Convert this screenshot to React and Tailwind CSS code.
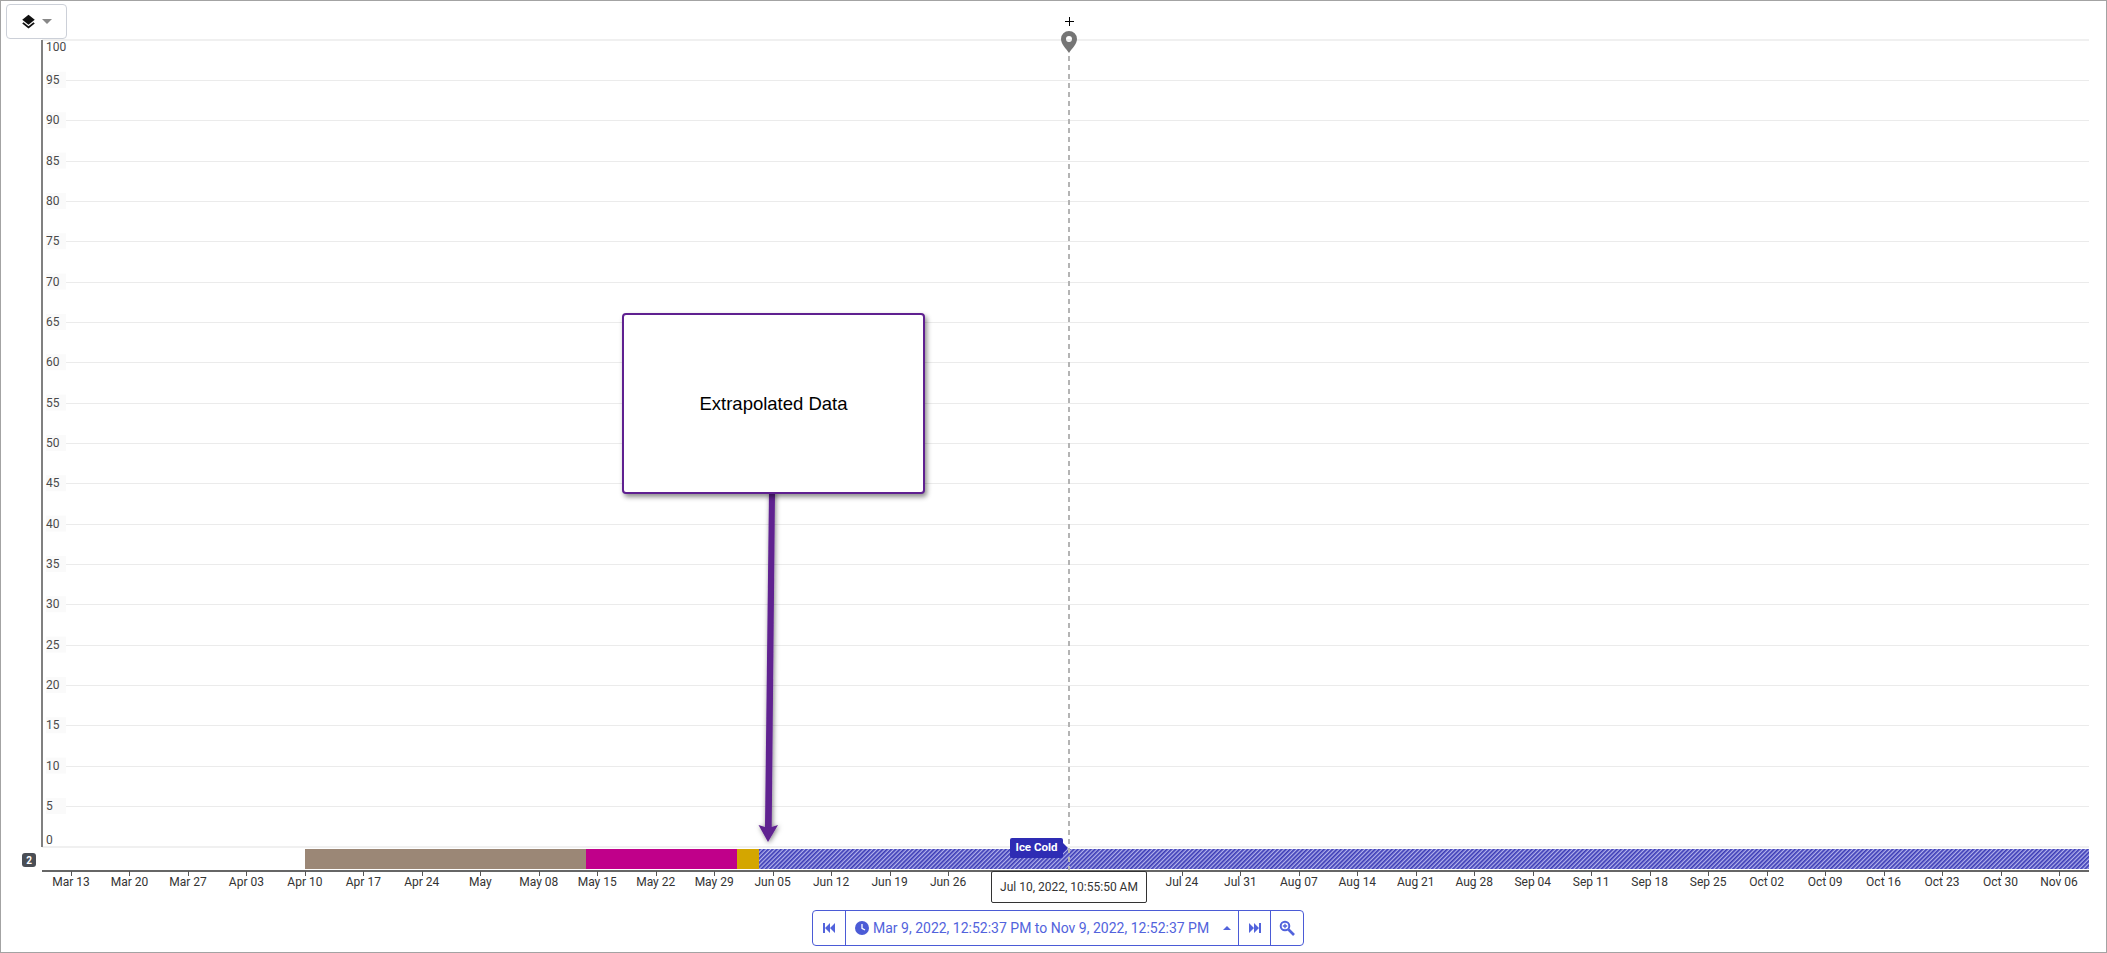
const Y_LABELS = [100, 95, 90, 85, 80, 75, 70, 65, 60, 55, 50, 45, 40, 35, 30, 25, 20, 15, 10, 5, 0]

const WEEKS = [
  'Mar 13', 'Mar 20', 'Mar 27', 'Apr 03', 'Apr 10', 'Apr 17', 'Apr 24', 'May', 'May 08', 'May 15', 'May 22', 'May 29',
  'Jun 05', 'Jun 12', 'Jun 19', 'Jun 26', 'Jul 03', 'Jul 10', 'Jul 17', 'Jul 24', 'Jul 31', 'Aug 07', 'Aug 14', 'Aug 21',
  'Aug 28', 'Sep 04', 'Sep 11', 'Sep 18', 'Sep 25', 'Oct 02', 'Oct 09', 'Oct 16', 'Oct 23', 'Oct 30', 'Nov 06',
]

// these sit under the hover tooltip
const HIDDEN_LABELS = ['Jul 03', 'Jul 10', 'Jul 17']

function Chart() {
  return (
    <svg className="block h-[909px] w-[2105px]" viewBox="1 1 2105 909" fill="none">
      <defs>
        <pattern id="hatch" width="3" height="3" patternUnits="userSpaceOnUse" patternTransform="rotate(45)">
          <rect width="3" height="3" fill="#b2b2ec" />
          <rect width="1.7" height="3" fill="#3c3cb6" />
        </pattern>
        <filter id="arrowShadow" x="-200%" y="-10%" width="500%" height="120%">
          <feDropShadow dx="1" dy="1" stdDeviation="2.5" floodColor="#000" floodOpacity="0.5" />
        </filter>
      </defs>

      {/* grid + y labels */}
      {Y_LABELS.map((v, i) => {
        const y = 39.5 + i * 40.335
        const first = v === 100
        const last = v === 0
        const textY = first ? 51 : last ? 844 : y + 4
        return (
          <g key={v}>
            {!first && !last && <rect x="46" y={y - 8} width="20" height="16" fill="#fafafa" />}
            <rect
              x={first || last ? 42 : 66}
              y={Math.round(y) - (first ? 1 : 0)}
              width={2089 - (first || last ? 42 : 66)}
              height={first || last ? 2 : 1}
              fill={first || last ? '#f0f0f0' : '#ebebeb'}
            />
            <text x="46" y={textY} fontSize="12" fill="#4a4a4a">{v}</text>
          </g>
        )
      })}
      <rect x="41" y="40" width="2" height="807" fill="#808080" />

      {/* state bars */}
      <rect x="305" y="849" width="281" height="20" fill="#9b8776" />
      <rect x="586" y="849" width="151" height="20" fill="#c0008a" />
      <rect x="737" y="849" width="22" height="20" fill="#d4a600" />
      <rect x="759" y="849" width="1330" height="20" fill="url(#hatch)" />

      {/* x axis */}
      <rect x="42" y="870" width="2047" height="2" fill="#666" />
      {WEEKS.map((label, i) => {
        const x = 71 + i * 58.47
        return (
          <g key={label}>
            <rect x={Math.round(x)} y="871" width="1" height="5" fill="#555" />
            {!HIDDEN_LABELS.includes(label) && (
              <text x={x} y="886" fontSize="12" textAnchor="middle" fill="#333">{label}</text>
            )}
          </g>
        )
      })}

      {/* marker */}
      <line x1="1069" y1="56" x2="1069" y2="870" stroke="#b4b4b4" strokeWidth="2" strokeDasharray="5 4" />
      <path d="M1069.5 17v9M1065 21.5h9" stroke="#000" strokeWidth="1" />
      <path
        fillRule="evenodd"
        d="M1069 31a8 8 0 0 0-8 8c0 5 5 9.5 8 14 3-4.500 8-9 8-14a8 8 0 0 0-8-8zm0 5a3 3 0 1 1 0 6 3 3 0 0 1 0-6z"
        fill="#757575"
      />

      {/* annotation arrow */}
      <g filter="url(#arrowShadow)">
        <path d="M769 492h6l-3.300 335 6.300-2-10 17-9.500-17 6.500 2z" fill="#5f2090" />
      </g>
    </svg>
  )
}

function LayersButton() {
  return (
    <button className="absolute left-[5px] top-[3px] flex h-[35px] w-[61px] items-center gap-[6px] rounded border border-[#ccd0d8] bg-white pl-[14px]">
      <svg width="15" height="15" viewBox="0 0 24 24" fill="#111">
        <path d="M12 1 2 9l10 8 10-8z" />
        <path d="M12 19.5 4 13.3 2 15l10 8 10-8-2-1.700z" />
      </svg>
      <svg width="10" height="5" viewBox="0 0 10 5" fill="#888">
        <path d="M0 0h10L5 5z" />
      </svg>
    </button>
  )
}

function RangeBar() {
  return (
    <div className="flex pl-[811px]">
      <div className="flex h-[36px] w-[492px] items-stretch rounded border border-[#4b5bd6] text-[#5263dc]">
        <div className="flex w-[33px] items-center justify-center border-r border-[#4b5bd6]">
          <svg width="12" height="10" viewBox="0 0 12 10" fill="currentColor">
            <path d="M0 0h2v10H0zM7 0v10L2 5zM12 0v10L7 5z" />
          </svg>
        </div>
        <div className="flex flex-1 items-center gap-[4px] pl-[9px] text-[14px]">
          <svg width="14" height="14" viewBox="0 0 14 14">
            <circle cx="7" cy="7" r="7" fill="#4b5bd6" />
            <path d="M7 3v4.300l3 1.700" stroke="#fff" strokeWidth="1.300" fill="none" />
          </svg>
          <span className="whitespace-nowrap">Mar 9, 2022, 12:52:37 PM to Nov 9, 2022, 12:52:37 PM</span>
          <svg className="ml-[10px]" width="8" height="4" viewBox="0 0 8 4" fill="currentColor">
            <path d="M0 4h8L4 0z" />
          </svg>
        </div>
        <div className="flex w-[33px] items-center justify-center border-x border-[#4b5bd6]">
          <svg width="12" height="10" viewBox="0 0 12 10" fill="currentColor">
            <path d="M0 0v10l5-5zM5 0v10l5-5zM10 0h2v10h-2z" />
          </svg>
        </div>
        <div className="flex w-[32px] items-center justify-center">
          <svg width="16" height="16" viewBox="0 0 16 16" fill="none" stroke="currentColor">
            <circle cx="6" cy="6" r="4.300" strokeWidth="2" />
            <path d="M9.500 9.500 15 15" strokeWidth="2.600" />
            <path d="M6 3.800v4.400M3.800 6h4.400" strokeWidth="1.300" />
          </svg>
        </div>
      </div>
    </div>
  )
}

export default function App() {
  return (
    <div className="relative h-[953px] w-[2107px] overflow-hidden border border-[#a3a3a3] bg-white font-['Roboto',sans-serif]">
      <Chart />
      <RangeBar />
      <LayersButton />

      {/* row count badge */}
      <div className="absolute left-[21px] top-[852px] flex h-[14px] w-[14px] items-center justify-center rounded-[3px] bg-[#4a4e55] text-[10px] font-bold text-white">
        2
      </div>

      {/* state label */}
      <div className="absolute left-[1009px] top-[837px] flex h-[20px] w-[53px] items-center justify-center rounded-[2px] bg-[#2e2cb4] text-[11.5px] font-bold text-white">
        Ice Cold
        <span className="absolute left-full top-[5px] h-0 w-0 border-y-[5px] border-l-[5px] border-y-transparent border-l-[#2e2cb4]" />
      </div>

      {/* hover tooltip */}
      <div className="absolute left-[990px] top-[870px] flex h-[32px] w-[156px] items-center justify-center rounded-[2px] border border-[#333] bg-white text-[12px] text-[#333]">
        Jul 10, 2022, 10:55:50 AM
      </div>

      {/* annotation */}
      <div className="absolute left-[621px] top-[312px] flex h-[181px] w-[303px] items-center justify-center rounded border-2 border-[#5f2090] bg-white font-['Liberation_Sans',sans-serif] text-[18.5px] text-black shadow-[2px_3px_5px_rgba(0,0,0,0.45)]">
        Extrapolated Data
      </div>
    </div>
  )
}
